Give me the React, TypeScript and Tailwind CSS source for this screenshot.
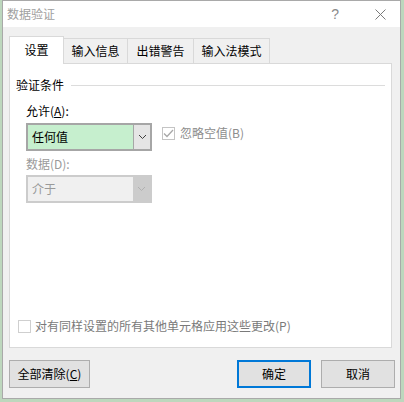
import React from 'react';

const FONT = { fontFamily: '"Noto Sans CJK SC", "Microsoft YaHei", "Liberation Sans", sans-serif' };

function Chevron({ color }: { color: string }) {
  return (
    <svg width="9" height="6" viewBox="0 0 9 6">
      <polyline points="1,1 4.5,4.5 8,1" fill="none" stroke={color} strokeWidth="1" />
    </svg>
  );
}

export default function App() {
  const tabs = ['输入信息', '出错警告', '输入法模式'];
  const tabWidths = ['w-[64px]', 'w-[66px]', 'w-[76px]'];

  return (
    <div className="w-[404px] h-[402px] bg-[#bdd7bd] pl-[2px]" style={FONT}>
      <div className="w-[399px] h-[399px] bg-[#f0f0f0] border border-[#a9a9a9] flex flex-col">
        {/* Title bar */}
        <div className="h-[26px] bg-white flex items-center pl-[4px] shrink-0">
          <span className="text-[12px] leading-[16px] text-[#a0a0a0]">数据验证</span>
          <div className="flex-1" />
          <span className="text-[14px] text-[#8a8a8a] mr-[36px]" style={{ fontFamily: '"Liberation Sans", sans-serif' }}>?</span>
          <svg width="11" height="11" viewBox="0 0 11 11" className="mr-[14px]">
            <line x1="0.5" y1="0.5" x2="10.5" y2="10.5" stroke="#7a7a7a" strokeWidth="1" />
            <line x1="10.5" y1="0.5" x2="0.5" y2="10.5" stroke="#7a7a7a" strokeWidth="1" />
          </svg>
        </div>

        {/* Tabs */}
        <div className="ml-[6px] mt-[8px] flex items-end h-[28px] relative z-10">
          <div className="w-[55px] h-[28px] bg-white border border-b-0 border-[#d9d9d9] flex items-center justify-center text-[12px] text-black -mb-px pb-px">
            设置
          </div>
          {tabs.map((t, i) => (
            <div
              key={t}
              className={`${tabWidths[i]} h-[25px] bg-[#f0f0f0] border border-b-0 border-l-0 border-[#d9d9d9] flex items-center justify-center text-[12px] text-black`}
            >
              {t}
            </div>
          ))}
        </div>

        {/* Panel */}
        <div className="ml-[6px] w-[383px] h-[285px] bg-white border border-[#d9d9d9] flex flex-col">
          <div className="flex items-center pt-[13px] pl-[6px] pr-[6px]">
            <span className="text-[12px] leading-[16px] text-black">验证条件</span>
            <div className="flex-1 h-px bg-[#dcdcdc] ml-[7px]" />
          </div>

          <div className="pl-[16px] mt-[10px] text-[12px] leading-[16px] text-black">
            允许(<span className="underline">A</span>):
          </div>
          <div className="pl-[16px] mt-[4px] flex items-center">
            <div className="w-[126px] h-[28px] border-2 border-[#a6a6a6] bg-[#c6efce] flex">
              <div className="flex-1 flex items-center pl-[4px] text-[12px] text-black">任何值</div>
              <div className="w-[17px] bg-[#e5e5e5] border-l border-[#a6a6a6] flex items-center justify-center">
                <Chevron color="#404040" />
              </div>
            </div>
            <div className="ml-[10px] -mt-[8px] w-[13px] h-[13px] border border-[#c4c4c4] bg-white flex items-center justify-center">
              <svg width="11" height="9" viewBox="0 0 11 9">
                <polyline points="1,4.5 4,7.5 10,1" fill="none" stroke="#a8a8a8" strokeWidth="1.3" />
              </svg>
            </div>
            <span className="ml-[5px] -mt-[8px] text-[12px] leading-[16px] text-[#8d8d8d]">忽略空值(B)</span>
          </div>

          <div className="pl-[16px] mt-[5px] text-[12px] leading-[16px] text-[#9a9a9a]">数据(D):</div>
          <div className="pl-[16px] mt-[3px]">
            <div className="w-[126px] h-[28px] border-2 border-[#cccccc] bg-[#f0f0f0] flex">
              <div className="flex-1 flex items-center pl-[4px] text-[12px] text-[#9a9a9a]">介于</div>
              <div className="w-[17px] bg-[#cccccc] flex items-center justify-center">
                <Chevron color="#b0b0b0" />
              </div>
            </div>
          </div>

          <div className="flex-1" />
          <div className="flex items-center pl-[8px] mb-[13px]">
            <div className="w-[13px] h-[13px] border border-[#cfcfcf] bg-white" />
            <span className="ml-[4px] text-[12px] leading-[16px] text-[#7a7a7a]">
              对有同样设置的所有其他单元格应用这些更改(P)
            </span>
          </div>
        </div>

        {/* Buttons */}
        <div className="ml-[6px] mt-[12px] flex items-center pr-[5px]">
          <button className="w-[81px] h-[28px] bg-[#e1e1e1] border border-[#adadad] text-[12px] text-black">
            全部清除(<span className="underline">C</span>)
          </button>
          <div className="flex-1" />
          <button className="w-[74px] h-[28px] bg-[#e1e1e1] border-2 border-[#0078d7] text-[12px] text-black">
            确定
          </button>
          <button className="ml-[10px] w-[74px] h-[28px] bg-[#e1e1e1] border border-[#adadad] text-[12px] text-black">
            取消
          </button>
        </div>
      </div>
    </div>
  );
}
